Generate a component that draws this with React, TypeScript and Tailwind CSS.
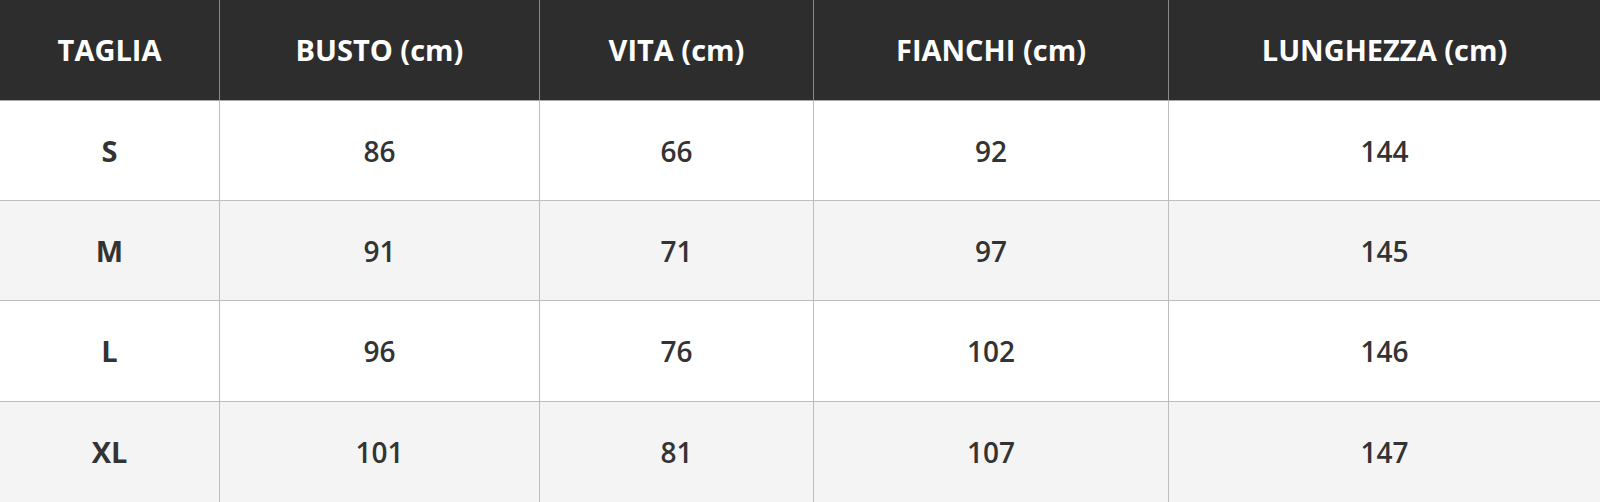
const headers = ["TAGLIA", "BUSTO (cm)", "VITA (cm)", "FIANCHI (cm)", "LUNGHEZZA (cm)"];

const rows = [
  ["S", "86", "66", "92", "144"],
  ["M", "91", "71", "97", "145"],
  ["L", "96", "76", "102", "146"],
  ["XL", "101", "81", "107", "147"],
];

const grid = "grid grid-cols-[220px_320px_274px_355px_1fr]";

export default function App() {
  return (
    <main className="w-[1600px] h-[502px] overflow-hidden bg-white font-['Open_Sans','Liberation_Sans',sans-serif] text-[#333]">
      <div className={`${grid} h-[101px] bg-[#2d2d2d] border-b border-[#a8a8a8]`}>
        {headers.map((h, i) => (
          <div
            key={h}
            className={`flex items-center justify-center text-[29px] font-bold text-white ${
              i < headers.length - 1 ? "border-r border-[#8a8a8a]" : ""
            }`}
          >
            {h}
          </div>
        ))}
      </div>
      {rows.map((row, r) => (
        <div
          key={row[0]}
          className={`${grid} ${r === 2 ? "h-[101px]" : "h-[100px]"} ${
            r % 2 === 1 ? "bg-[#f4f4f4]" : "bg-white"
          } ${r < rows.length - 1 ? "border-b border-[#bdbdbd]" : ""}`}
        >
          {row.map((cell, i) => (
            <div
              key={i}
              className={`flex items-center justify-center ${
                i === 0 ? "text-[29px] font-bold" : "text-[28px] font-semibold"
              } ${i < row.length - 1 ? "border-r border-[#bdbdbd]" : ""}`}
            >
              {cell}
            </div>
          ))}
        </div>
      ))}
    </main>
  );
}
